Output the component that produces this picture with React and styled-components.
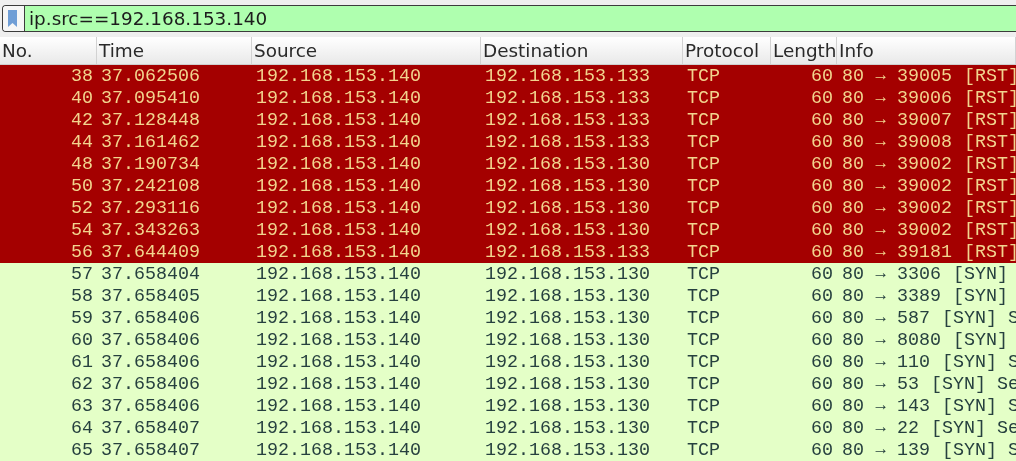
import React from "react";
import styled, { createGlobalStyle } from "styled-components";

const GlobalStyle = createGlobalStyle`
  html, body {
    margin: 0;
    padding: 0;
    background: #efefef;
    overflow: hidden;
  }
`;

const rows = [
  [38, "37.062506", "133", "39005", "[RST]", 1],
  [40, "37.095410", "133", "39006", "[RST]", 1],
  [42, "37.128448", "133", "39007", "[RST]", 1],
  [44, "37.161462", "133", "39008", "[RST]", 1],
  [48, "37.190734", "130", "39002", "[RST]", 1],
  [50, "37.242108", "130", "39002", "[RST]", 1],
  [52, "37.293116", "130", "39002", "[RST]", 1],
  [54, "37.343263", "130", "39002", "[RST]", 1],
  [56, "37.644409", "133", "39181", "[RST]", 1],
  [57, "37.658404", "130", "3306", "[SYN]", 0],
  [58, "37.658405", "130", "3389", "[SYN]", 0],
  [59, "37.658406", "130", "587", "[SYN] S", 0],
  [60, "37.658406", "130", "8080", "[SYN]", 0],
  [61, "37.658406", "130", "110", "[SYN] S", 0],
  [62, "37.658406", "130", "53", "[SYN] Se", 0],
  [63, "37.658406", "130", "143", "[SYN] S", 0],
  [64, "37.658407", "130", "22", "[SYN] Se", 0],
  [65, "37.658407", "130", "139", "[SYN] S", 0],
];

const headers = [
  ["No.", 97],
  ["Time", 155],
  ["Source", 229],
  ["Destination", 202],
  ["Protocol", 88],
  ["Length", 66],
  ["Info", 179],
];

function BookmarkIcon() {
  return (
    <svg width="9" height="17" viewBox="0 0 9 17">
      <path d="M0 0h9v17l-4.5-4-4.5 4z" fill="#6f9ed6" />
    </svg>
  );
}

export default function App() {
  return (
    <Page>
      <GlobalStyle />
      <FilterBar>
        <BookmarkButton>
          <BookmarkIcon />
        </BookmarkButton>
        <FilterInput>ip.src==192.168.153.140</FilterInput>
      </FilterBar>
      <HeaderRow>
        {headers.map(([label, width]) => (
          <HeaderCell key={label} $width={width}>
            {label}
          </HeaderCell>
        ))}
      </HeaderRow>
      <List>
        {rows.map(([no, time, dest, port, flags, rst]) => (
          <Row key={no} $rst={rst}>
            <NoCell>{no}</NoCell>
            <TimeCell>{time}</TimeCell>
            <SourceCell>192.168.153.140</SourceCell>
            <DestCell>192.168.153.{dest}</DestCell>
            <ProtoCell>TCP</ProtoCell>
            <LengthCell>60</LengthCell>
            <InfoCell>
              80 <Arrow>→</Arrow> {port} <Flags>{flags}</Flags>
            </InfoCell>
          </Row>
        ))}
      </List>
    </Page>
  );
}

const Page = styled.div`
  width: 1016px;
  height: 461px;
  overflow: hidden;
  background: #efefef;
  padding-top: 5px;
  box-sizing: border-box;
  filter: blur(0.35px);
`;

const FilterBar = styled.div`
  display: flex;
  height: 27px;
  margin-left: 2px;
  box-sizing: border-box;
  border: 1px solid #3c3c3c;
  border-right: none;
  border-radius: 4px 0 0 4px;
`;

const BookmarkButton = styled.div`
  width: 22px;
  flex: none;
  box-sizing: border-box;
  padding-left: 5px;
  display: flex;
  align-items: center;
  background: #f6f6f6;
  border-right: 1px solid #3c3c3c;
  border-radius: 3px 0 0 3px;
`;

const FilterInput = styled.div`
  flex: 1;
  background: #afffaf;
  color: #1c1c1c;
  font: 18.4px/25px "DejaVu Sans", sans-serif;
  padding-left: 4px;
`;

const HeaderRow = styled.div`
  display: flex;
  height: 28px;
  margin-top: 5px;
  background: linear-gradient(#ffffff, #e9e9e9);
  border-bottom: 1px solid #cfcfcf;
  box-sizing: border-box;
`;

const HeaderCell = styled.div`
  width: ${(p) => p.$width}px;
  flex: none;
  box-sizing: border-box;
  padding-left: 2px;
  border-right: 1px solid #d2d2d2;
  font: 18.4px/27px "DejaVu Sans", sans-serif;
  color: #2a2a2a;
  overflow: hidden;
  white-space: nowrap;
`;

const List = styled.div`
  display: flex;
  flex-direction: column;
`;

const Row = styled.div`
  display: flex;
  height: 22px;
  flex: none;
  padding-top: 1px;
  box-sizing: border-box;
  font: 18.33px/22px "Liberation Mono", monospace;
  white-space: pre;
  background: ${(p) => (p.$rst ? "#a40000" : "#e4ffc7")};
  color: ${(p) => (p.$rst ? "#f2d48e" : "#26403f")};
`;

const NoCell = styled.div`
  width: 97px;
  flex: none;
  box-sizing: border-box;
  padding-right: 4px;
  text-align: right;
`;

const TimeCell = styled.div`
  width: 155px;
  flex: none;
  padding-left: 4px;
  box-sizing: border-box;
`;

const SourceCell = styled(TimeCell)`
  width: 229px;
`;

const DestCell = styled(TimeCell)`
  width: 202px;
`;

const ProtoCell = styled(TimeCell)`
  width: 88px;
`;

const LengthCell = styled(NoCell)`
  width: 66px;
`;

const InfoCell = styled(TimeCell)`
  width: 179px;
  overflow: hidden;
  padding-left: 5px;
`;

const Arrow = styled.span`
  display: inline-block;
  width: 11px;
  font-size: 17px;
  line-height: 20px;
  vertical-align: 1px;
  text-align: center;
`;

const Flags = styled.span`
  margin-left: 1px;
`;
